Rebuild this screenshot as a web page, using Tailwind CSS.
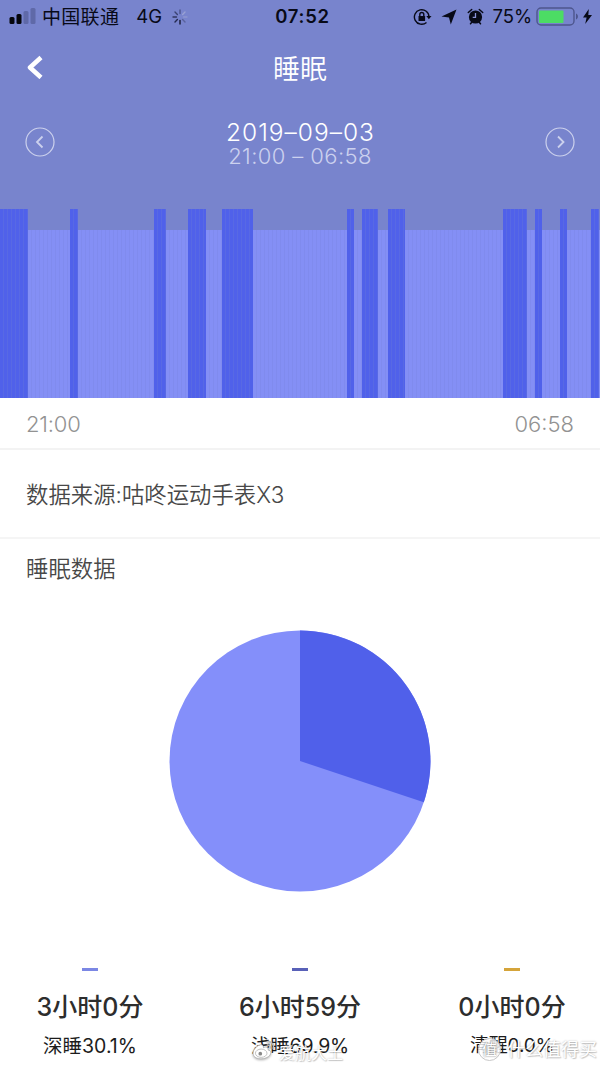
<!DOCTYPE html>
<html lang="zh-CN">
<head>
    <meta charset="UTF-8">
    <meta name="viewport" content="width=device-width, initial-scale=1.0">
    <title>睡眠</title>
    <script src="https://cdn.jsdelivr.net/npm/@tailwindcss/browser@4"></script>
</head>
<body class="bg-white font-['Inter','Noto_Sans_CJK_SC',sans-serif]">
    <div class="relative w-[600px] h-[1067px] overflow-hidden flex flex-col bg-white whitespace-nowrap">
        <header class="h-[398px] bg-[#7884cd] flex flex-col shrink-0">
            <!-- Status bar -->
            <div class="h-[33px] flex items-center justify-between pl-[9px] pr-[7px] text-[#080a18]">
                <div class="flex items-center w-[230px]">
                    <svg class="w-[28px] h-[17px] shrink-0" viewBox="0 0 28 17">
                        <rect x="0.5" y="9" width="5" height="7" rx="1.5" fill="#05060c"/>
                        <rect x="7.5" y="6" width="5" height="10" rx="1.5" fill="#05060c"/>
                        <rect x="14.5" y="3" width="5" height="13" rx="1.5" fill="#5f69a8"/>
                        <rect x="21.5" y="0" width="5" height="16" rx="1.5" fill="#5f69a8"/>
                    </svg>
                    <span class="mt-[2px] ml-[5px] text-[19px] leading-none tracking-[0.3px]">中国联通</span>
                    <span class="ml-[17px] text-[18.500px] leading-none">4G</span>
                    <svg class="ml-[10px] w-[16px] h-[16px] shrink-0" viewBox="0 0 16 16" stroke-width="1.4" stroke-linecap="round">
                        <path d="M8 1v3.500" stroke="#4b548a"/>
                        <path d="M13 3l-2.400 2.400" stroke="#99a1d4"/>
                        <path d="M15 8h-3.500" stroke="#8d96d0"/>
                        <path d="M13 13l-2.400-2.400" stroke="#5a639c"/>
                        <path d="M8 15v-3.500" stroke="#171a33"/>
                        <path d="M3 13l2.400-2.400" stroke="#252a50"/>
                        <path d="M1 8h3.500" stroke="#30365f"/>
                        <path d="M3 3l2.400 2.400" stroke="#3b4373"/>
                    </svg>
                </div>
                <span class="text-[18.5px] font-semibold leading-none tracking-[0.7px] pl-[3px]">07:52</span>
                <div class="flex items-center justify-end w-[230px]">
                    <svg class="w-[19px] h-[18px] shrink-0" viewBox="0 0 19 18" fill="none" stroke="#080a18" stroke-width="1.4">
                        <path d="M13.500 14.500A7.300 7.300 0 1 1 16 9"/>
                        <path d="M13.300 8h5.200l-2.600 3.300z" fill="#080a18" stroke="none"/>
                        <rect x="5.500" y="8" width="6.600" height="5" rx="0.600" fill="#080a18" stroke="none"/>
                        <path d="M6.800 8.300V6.500a2 2 0 0 1 4 0v1.800"/>
                    </svg>
                    <svg class="ml-[9px] w-[16px] h-[16px] shrink-0" viewBox="0 0 16 16" fill="#080a18">
                        <path d="M15.500 0.500L9.800 15.500 8 8.500 0.500 7.500z"/>
                    </svg>
                    <svg class="ml-[10px] w-[17px] h-[17px] shrink-0" viewBox="0 0 17 17">
                        <circle cx="8.500" cy="9" r="6.600" fill="#080a18"/>
                        <path d="M1.300 4.500L4.700 1.500M12.300 1.500l3.400 3M3.500 15.800l1.500-1.800M13.500 15.800L12 14" stroke="#080a18" stroke-width="1.500" stroke-linecap="round"/>
                        <path d="M8.500 5v4.400H5.700" stroke="#8992d8" stroke-width="1.300" fill="none"/>
                    </svg>
                    <span class="ml-[9px] text-[18.5px] leading-none tracking-[-0.1px]">75%</span>
                    <svg class="ml-[4px] w-[43px] h-[19px] shrink-0" viewBox="0 0 43 19">
                        <rect x="1" y="1" width="37" height="17" rx="4" fill="none" stroke="#4d568d" stroke-width="1.400"/>
                        <rect x="3" y="3.500" width="24.500" height="12.500" rx="1" fill="#4cdc64"/>
                        <path d="M40 6.500c2.600.8 2.600 5.200 0 6z" fill="#4d568d"/>
                    </svg>
                    <svg class="ml-[3px] w-[11px] h-[15px] shrink-0" viewBox="0 0 11 15" fill="#080a18">
                        <path d="M6.800 0L1 8.500h3.600L3.200 15 10 6H6.300z"/>
                    </svg>
                </div>
            </div>

            <!-- Title -->
            <div class="h-[68px] grid grid-cols-3 items-center px-[26px]">
                <svg class="w-[17px] h-[24px]" viewBox="0 0 17 24" fill="none" stroke="#fff" stroke-width="4.500" stroke-linecap="butt" stroke-linejoin="round">
                    <path d="M15 2.500L4 12.500l11 10"/>
                </svg>
                <h1 class="text-center text-[27px] leading-none text-white font-['Noto_Sans_CJK_SC',sans-serif] font-[350]">睡眠</h1>
            </div>

            <!-- Date picker -->
            <div class="h-[82px] flex items-center justify-between px-[25px]">
                <svg class="w-[30px] h-[30px]" viewBox="0 0 30 30" fill="none" stroke="#ccd1ed">
                    <circle cx="15" cy="15" r="14" stroke-width="1.200"/>
                    <path d="M17.500 9.500L12 15l5.500 5.500" stroke-width="1.800"/>
                </svg>
                <div class="pt-[4px] flex flex-col items-center">
                    <span class="text-[24.5px] leading-[24px] tracking-[1px] pl-px text-white font-[350]">2019–09–03</span>
                    <span class="text-[22px] leading-[24px] tracking-[0.4px] text-[#ccd1ef] font-[350]">21:00 – 06:58</span>
                </div>
                <svg class="w-[30px] h-[30px]" viewBox="0 0 30 30" fill="none" stroke="#ccd1ed">
                    <circle cx="15" cy="15" r="14" stroke-width="1.200"/>
                    <path d="M13 9.500l5.500 5.500-5.500 5.500" stroke-width="1.800"/>
                </svg>
            </div>

            <div id="sleepChart" class="mt-auto h-[189px] flex items-end"></div>
        </header>

        <div class="h-[52px] pt-[2px] border-b-2 border-[#f3f3f3] flex items-center justify-between px-[26px] text-[22px] text-[#929292] font-[350] shrink-0">
            <span class="tracking-[-0.2px]">21:00</span>
            <span>06:58</span>
        </div>
        <div class="h-[89px] pt-[2px] border-b-2 border-[#f5f5f5] flex items-center px-[26px] text-[22.4px] text-[#484848] shrink-0 font-[350]">数据来源:咕咚运动手表X3</div>
        <h2 class="h-[60px] flex items-center px-[26px] text-[22.4px] text-[#484848] shrink-0 font-[350]">睡眠数据</h2>

        <svg class="mt-[31px] mx-auto w-[262px] h-[262px] shrink-0" viewBox="-131 -131 262 262">
            <circle r="130.500" fill="#848ffa"/>
            <path d="M0 0V-130.500A130.500 130.500 0 0 1 123.800 41.200z" fill="#5060ea"/>
        </svg>

        <div class="mt-[76px] flex justify-between text-center">
            <div class="w-[180px] flex flex-col items-center">
                <span class="w-[16px] h-[3px] bg-[#7b87e4]"></span>
                <span class="mt-[18px] text-[25px] leading-[36px] font-medium text-[#2d2d2d]">3小时0分</span>
                <span class="mt-[8px] text-[19.5px] leading-[26px] text-[#1c1c1c]">深睡30.1%</span>
            </div>
            <div class="w-[180px] pr-[4px] flex flex-col items-center">
                <span class="w-[16px] h-[3px] bg-[#5961b8]"></span>
                <span class="mt-[18px] text-[25px] leading-[36px] font-medium text-[#2d2d2d]">6小时59分</span>
                <span class="mt-[8px] text-[19.5px] leading-[26px] text-[#1c1c1c] tracking-[-0.2px]">浅睡69.9%</span>
            </div>
            <div class="w-[176px] flex flex-col items-center">
                <span class="w-[16px] h-[3px] bg-[#d5a43a]"></span>
                <span class="mt-[18px] text-[25px] leading-[36px] font-medium text-[#2d2d2d]">0小时0分</span>
                <span class="mt-[8px] text-[19px] leading-[26px] text-[#1c1c1c] tracking-[-0.2px]">清醒0.0%</span>
            </div>
        </div>

        <!-- Watermarks over the stats -->
        <div class="absolute left-[252px] top-[1039px] flex items-center gap-[4px]">
            <svg class="w-[23px] h-[22px] drop-shadow-[0_1px_1px_rgba(0,0,0,0.3)]" viewBox="0 0 25 23" fill="#fff" stroke="#b5b5b5" stroke-width="0.900">
                <path d="M9 6c-5 1-9 7-7.500 11 2 5.500 14 5.500 18 0 2-3 .5-5-2-5.500.5-3-2-4-5-2.500C12.500 6.500 11 5.500 9 6z"/>
                <ellipse cx="10" cy="15" rx="6.300" ry="4.500"/>
                <circle cx="9" cy="15.500" r="2" fill="#888" stroke="none"/>
                <path d="M16 2.500c5-1 8.500 3 7 8M16 6c3-.5 4.500 1.500 3.700 4" fill="none" stroke="#bbb" stroke-width="1.500"/>
            </svg>
            <span class="mt-[5px] text-[16px] leading-none text-white [text-shadow:0_0_2px_rgba(0,0,0,0.25),1px_1px_1px_rgba(0,0,0,0.18)]">爱航大土</span>
        </div>
        <div class="absolute left-[478px] top-[1038px] flex items-center gap-[6px] text-white">
            <span class="w-[23px] h-[23px] rounded-full border border-[#c8c8c8] bg-white/80 flex items-center justify-center text-[15px] leading-none [text-shadow:0_0_2px_rgba(0,0,0,0.65)]">值</span>
            <span class="text-[18px] leading-none [text-shadow:0_0_2px_rgba(0,0,0,0.28),1px_1px_1px_rgba(0,0,0,0.18)]">什么值得买</span>
        </div>
    </div>

    <script>
        // [start, end] of every deep sleep block, in px along the chart
        const deepSleep = [
            [0, 28], [70, 78], [154, 165.5], [188, 205.5], [222, 252.5], [346.5, 354],
            [361.5, 378], [388, 405], [503, 527], [535, 542], [560, 567], [591, 599]
        ];
        const chart = document.getElementById("sleepChart");

        function addBlock(width, deep) {
            const block = document.createElement("div");
            block.className = deep
                ? "shrink-0 h-[189px] bg-[repeating-linear-gradient(90deg,#5061ea_0px,#5061ea_3px,#5869e4_3px,#5869e4_4px)]"
                : "shrink-0 h-[168px] bg-[repeating-linear-gradient(90deg,#848ff5_0px,#848ff5_3px,#808bee_3px,#808bee_4px)]";
            block.style.width = `${width}px`;
            chart.appendChild(block);
        }

        let x = 0;
        deepSleep.forEach(([start, end]) => {
            if (start > x) addBlock(start - x, false);
            addBlock(end - start, true);
            x = end;
        });
        addBlock(600 - x, false);
    </script>
</body>
</html>
